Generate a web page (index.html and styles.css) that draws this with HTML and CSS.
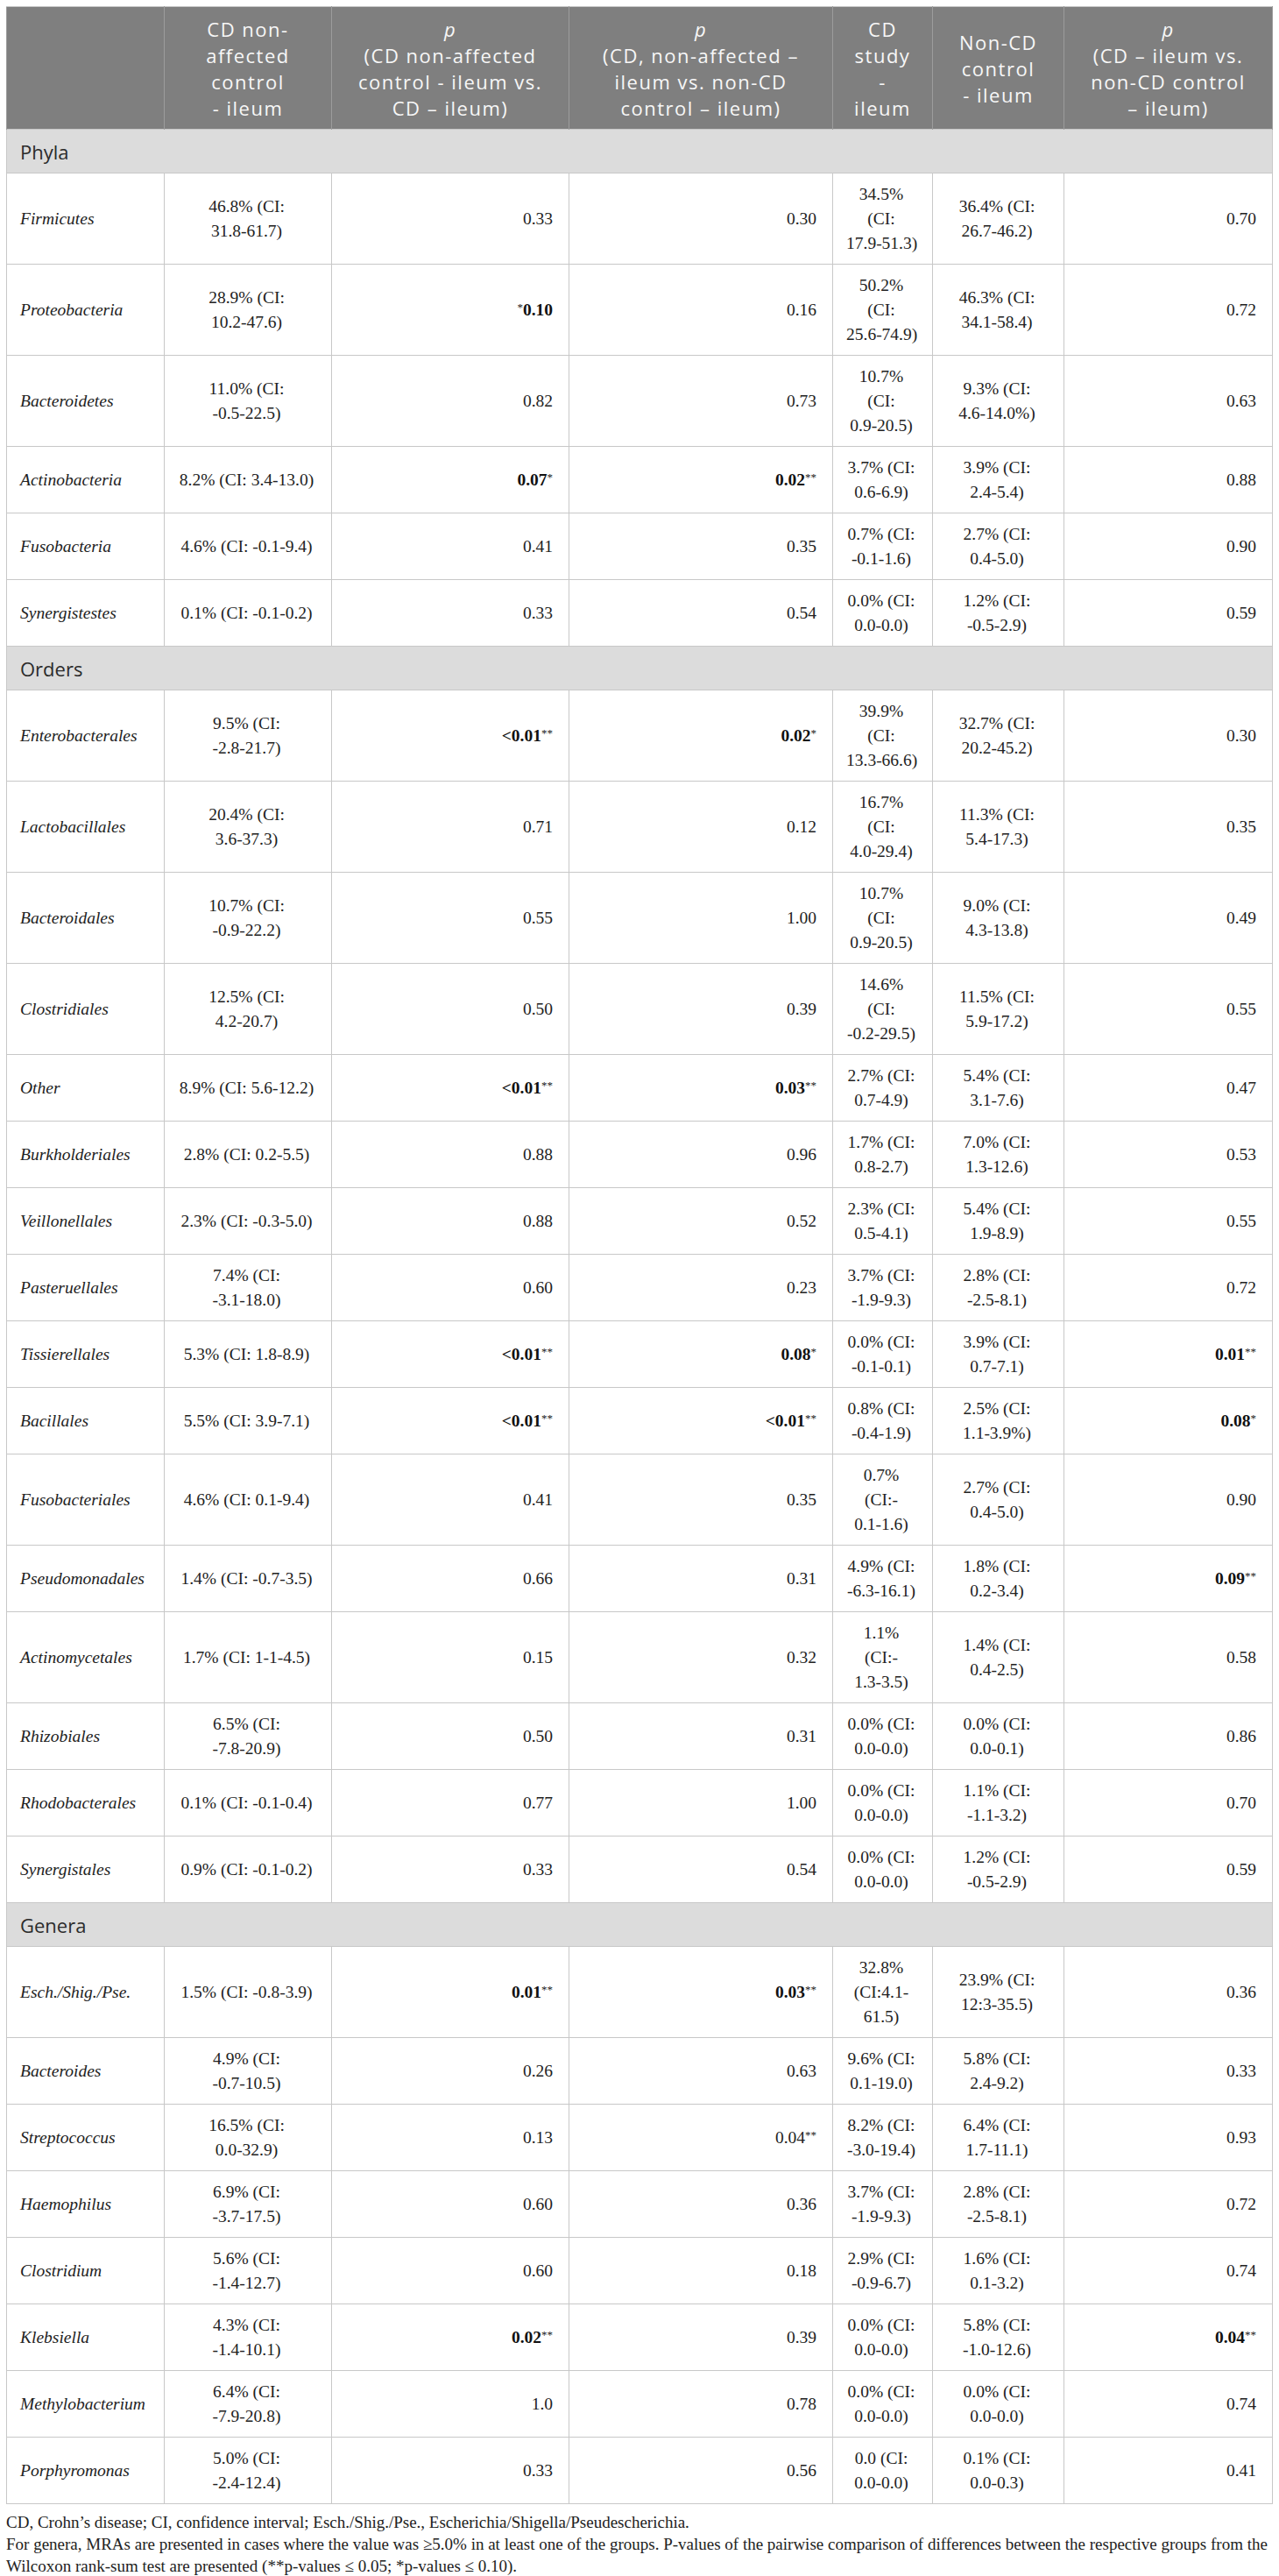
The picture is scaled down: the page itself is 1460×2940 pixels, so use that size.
FILE: index.html
```html
<!DOCTYPE html>
<html lang="en">
<head>
  <meta charset="UTF-8">
  <title>Mean relative abundance - ileum</title>
  <link rel="stylesheet" href="styles.css">
</head>
<body>

  <div class="page">

    <!-- Table -->
    <table class="mra-table">
      <colgroup>
        <col class="c-name">
        <col class="c-ctrl">
        <col class="c-p1">
        <col class="c-p2">
        <col class="c-study">
        <col class="c-nocd">
        <col class="c-p3">
      </colgroup>
      <thead>
        <tr>
          <th></th>
          <th>CD non-<br>affected<br>control<br>- ileum</th>
          <th><i>p</i><br>(CD non-affected<br>control - ileum vs.<br>CD – ileum)</th>
          <th><i>p</i><br>(CD, non-affected –<br>ileum vs. non-CD<br>control – ileum)</th>
          <th>CD<br>study<br>-<br>ileum</th>
          <th>Non-CD<br>control<br>- ileum</th>
          <th><i>p</i><br>(CD – ileum vs.<br>non-CD control<br>– ileum)</th>
        </tr>
      </thead>
      <tbody>
        <tr class="section"><td colspan="7">Phyla</td></tr>
        <tr>
          <td class="name">Firmicutes</td>
          <td class="mid">46.8% (CI:<br>31.8-61.7)</td>
          <td class="right">0.33</td>
          <td class="right">0.30</td>
          <td class="mid">34.5%<br>(CI:<br>17.9-51.3)</td>
          <td class="mid">36.4% (CI:<br>26.7-46.2)</td>
          <td class="right">0.70</td>
        </tr>
        <tr>
          <td class="name">Proteobacteria</td>
          <td class="mid">28.9% (CI:<br>10.2-47.6)</td>
          <td class="right"><span class="sig">*</span><b>0.10</b></td>
          <td class="right">0.16</td>
          <td class="mid">50.2%<br>(CI:<br>25.6-74.9)</td>
          <td class="mid">46.3% (CI:<br>34.1-58.4)</td>
          <td class="right">0.72</td>
        </tr>
        <tr>
          <td class="name">Bacteroidetes</td>
          <td class="mid">11.0% (CI:<br>-0.5-22.5)</td>
          <td class="right">0.82</td>
          <td class="right">0.73</td>
          <td class="mid">10.7%<br>(CI:<br>0.9-20.5)</td>
          <td class="mid">9.3% (CI:<br>4.6-14.0%)</td>
          <td class="right">0.63</td>
        </tr>
        <tr>
          <td class="name">Actinobacteria</td>
          <td class="mid">8.2% (CI: 3.4-13.0)</td>
          <td class="right"><b>0.07</b><span class="sig">*</span></td>
          <td class="right"><b>0.02</b><span class="sig">**</span></td>
          <td class="mid">3.7% (CI:<br>0.6-6.9)</td>
          <td class="mid">3.9% (CI:<br>2.4-5.4)</td>
          <td class="right">0.88</td>
        </tr>
        <tr>
          <td class="name">Fusobacteria</td>
          <td class="mid">4.6% (CI: -0.1-9.4)</td>
          <td class="right">0.41</td>
          <td class="right">0.35</td>
          <td class="mid">0.7% (CI:<br>-0.1-1.6)</td>
          <td class="mid">2.7% (CI:<br>0.4-5.0)</td>
          <td class="right">0.90</td>
        </tr>
        <tr>
          <td class="name">Synergistestes</td>
          <td class="mid">0.1% (CI: -0.1-0.2)</td>
          <td class="right">0.33</td>
          <td class="right">0.54</td>
          <td class="mid">0.0% (CI:<br>0.0-0.0)</td>
          <td class="mid">1.2% (CI:<br>-0.5-2.9)</td>
          <td class="right">0.59</td>
        </tr>

        <tr class="section"><td colspan="7">Orders</td></tr>
        <tr>
          <td class="name">Enterobacterales</td>
          <td class="mid">9.5% (CI:<br>-2.8-21.7)</td>
          <td class="right"><b>&lt;0.01</b><span class="sig">**</span></td>
          <td class="right"><b>0.02</b><span class="sig">*</span></td>
          <td class="mid">39.9%<br>(CI:<br>13.3-66.6)</td>
          <td class="mid">32.7% (CI:<br>20.2-45.2)</td>
          <td class="right">0.30</td>
        </tr>
        <tr>
          <td class="name">Lactobacillales</td>
          <td class="mid">20.4% (CI:<br>3.6-37.3)</td>
          <td class="right">0.71</td>
          <td class="right">0.12</td>
          <td class="mid">16.7%<br>(CI:<br>4.0-29.4)</td>
          <td class="mid">11.3% (CI:<br>5.4-17.3)</td>
          <td class="right">0.35</td>
        </tr>
        <tr>
          <td class="name">Bacteroidales</td>
          <td class="mid">10.7% (CI:<br>-0.9-22.2)</td>
          <td class="right">0.55</td>
          <td class="right">1.00</td>
          <td class="mid">10.7%<br>(CI:<br>0.9-20.5)</td>
          <td class="mid">9.0% (CI:<br>4.3-13.8)</td>
          <td class="right">0.49</td>
        </tr>
        <tr>
          <td class="name">Clostridiales</td>
          <td class="mid">12.5% (CI:<br>4.2-20.7)</td>
          <td class="right">0.50</td>
          <td class="right">0.39</td>
          <td class="mid">14.6%<br>(CI:<br>-0.2-29.5)</td>
          <td class="mid">11.5% (CI:<br>5.9-17.2)</td>
          <td class="right">0.55</td>
        </tr>
        <tr>
          <td class="name">Other</td>
          <td class="mid">8.9% (CI: 5.6-12.2)</td>
          <td class="right"><b>&lt;0.01</b><span class="sig">**</span></td>
          <td class="right"><b>0.03</b><span class="sig">**</span></td>
          <td class="mid">2.7% (CI:<br>0.7-4.9)</td>
          <td class="mid">5.4% (CI:<br>3.1-7.6)</td>
          <td class="right">0.47</td>
        </tr>
        <tr>
          <td class="name">Burkholderiales</td>
          <td class="mid">2.8% (CI: 0.2-5.5)</td>
          <td class="right">0.88</td>
          <td class="right">0.96</td>
          <td class="mid">1.7% (CI:<br>0.8-2.7)</td>
          <td class="mid">7.0% (CI:<br>1.3-12.6)</td>
          <td class="right">0.53</td>
        </tr>
        <tr>
          <td class="name">Veillonellales</td>
          <td class="mid">2.3% (CI: -0.3-5.0)</td>
          <td class="right">0.88</td>
          <td class="right">0.52</td>
          <td class="mid">2.3% (CI:<br>0.5-4.1)</td>
          <td class="mid">5.4% (CI:<br>1.9-8.9)</td>
          <td class="right">0.55</td>
        </tr>
        <tr>
          <td class="name">Pasteruellales</td>
          <td class="mid">7.4% (CI:<br>-3.1-18.0)</td>
          <td class="right">0.60</td>
          <td class="right">0.23</td>
          <td class="mid">3.7% (CI:<br>-1.9-9.3)</td>
          <td class="mid">2.8% (CI:<br>-2.5-8.1)</td>
          <td class="right">0.72</td>
        </tr>
        <tr>
          <td class="name">Tissierellales</td>
          <td class="mid">5.3% (CI: 1.8-8.9)</td>
          <td class="right"><b>&lt;0.01</b><span class="sig">**</span></td>
          <td class="right"><b>0.08</b><span class="sig">*</span></td>
          <td class="mid">0.0% (CI:<br>-0.1-0.1)</td>
          <td class="mid">3.9% (CI:<br>0.7-7.1)</td>
          <td class="right"><b>0.01</b><span class="sig">**</span></td>
        </tr>
        <tr>
          <td class="name">Bacillales</td>
          <td class="mid">5.5% (CI: 3.9-7.1)</td>
          <td class="right"><b>&lt;0.01</b><span class="sig">**</span></td>
          <td class="right"><b>&lt;0.01</b><span class="sig">**</span></td>
          <td class="mid">0.8% (CI:<br>-0.4-1.9)</td>
          <td class="mid">2.5% (CI:<br>1.1-3.9%)</td>
          <td class="right"><b>0.08</b><span class="sig">*</span></td>
        </tr>
        <tr>
          <td class="name">Fusobacteriales</td>
          <td class="mid">4.6% (CI: 0.1-9.4)</td>
          <td class="right">0.41</td>
          <td class="right">0.35</td>
          <td class="mid">0.7%<br>(CI:-<br>0.1-1.6)</td>
          <td class="mid">2.7% (CI:<br>0.4-5.0)</td>
          <td class="right">0.90</td>
        </tr>
        <tr>
          <td class="name">Pseudomonadales</td>
          <td class="mid">1.4% (CI: -0.7-3.5)</td>
          <td class="right">0.66</td>
          <td class="right">0.31</td>
          <td class="mid">4.9% (CI:<br>-6.3-16.1)</td>
          <td class="mid">1.8% (CI:<br>0.2-3.4)</td>
          <td class="right"><b>0.09</b><span class="sig">**</span></td>
        </tr>
        <tr>
          <td class="name">Actinomycetales</td>
          <td class="mid">1.7% (CI: 1-1-4.5)</td>
          <td class="right">0.15</td>
          <td class="right">0.32</td>
          <td class="mid">1.1%<br>(CI:-<br>1.3-3.5)</td>
          <td class="mid">1.4% (CI:<br>0.4-2.5)</td>
          <td class="right">0.58</td>
        </tr>
        <tr>
          <td class="name">Rhizobiales</td>
          <td class="mid">6.5% (CI:<br>-7.8-20.9)</td>
          <td class="right">0.50</td>
          <td class="right">0.31</td>
          <td class="mid">0.0% (CI:<br>0.0-0.0)</td>
          <td class="mid">0.0% (CI:<br>0.0-0.1)</td>
          <td class="right">0.86</td>
        </tr>
        <tr>
          <td class="name">Rhodobacterales</td>
          <td class="mid">0.1% (CI: -0.1-0.4)</td>
          <td class="right">0.77</td>
          <td class="right">1.00</td>
          <td class="mid">0.0% (CI:<br>0.0-0.0)</td>
          <td class="mid">1.1% (CI:<br>-1.1-3.2)</td>
          <td class="right">0.70</td>
        </tr>
        <tr>
          <td class="name">Synergistales</td>
          <td class="mid">0.9% (CI: -0.1-0.2)</td>
          <td class="right">0.33</td>
          <td class="right">0.54</td>
          <td class="mid">0.0% (CI:<br>0.0-0.0)</td>
          <td class="mid">1.2% (CI:<br>-0.5-2.9)</td>
          <td class="right">0.59</td>
        </tr>

        <tr class="section"><td colspan="7">Genera</td></tr>
        <tr>
          <td class="name">Esch./Shig./Pse.</td>
          <td class="mid">1.5% (CI: -0.8-3.9)</td>
          <td class="right"><b>0.01</b><span class="sig">**</span></td>
          <td class="right"><b>0.03</b><span class="sig">**</span></td>
          <td class="mid">32.8%<br>(CI:4.1-<br>61.5)</td>
          <td class="mid">23.9% (CI:<br>12:3-35.5)</td>
          <td class="right">0.36</td>
        </tr>
        <tr>
          <td class="name">Bacteroides</td>
          <td class="mid">4.9% (CI:<br>-0.7-10.5)</td>
          <td class="right">0.26</td>
          <td class="right">0.63</td>
          <td class="mid">9.6% (CI:<br>0.1-19.0)</td>
          <td class="mid">5.8% (CI:<br>2.4-9.2)</td>
          <td class="right">0.33</td>
        </tr>
        <tr>
          <td class="name">Streptococcus</td>
          <td class="mid">16.5% (CI:<br>0.0-32.9)</td>
          <td class="right">0.13</td>
          <td class="right">0.04<span class="sig">**</span></td>
          <td class="mid">8.2% (CI:<br>-3.0-19.4)</td>
          <td class="mid">6.4% (CI:<br>1.7-11.1)</td>
          <td class="right">0.93</td>
        </tr>
        <tr>
          <td class="name">Haemophilus</td>
          <td class="mid">6.9% (CI:<br>-3.7-17.5)</td>
          <td class="right">0.60</td>
          <td class="right">0.36</td>
          <td class="mid">3.7% (CI:<br>-1.9-9.3)</td>
          <td class="mid">2.8% (CI:<br>-2.5-8.1)</td>
          <td class="right">0.72</td>
        </tr>
        <tr>
          <td class="name">Clostridium</td>
          <td class="mid">5.6% (CI:<br>-1.4-12.7)</td>
          <td class="right">0.60</td>
          <td class="right">0.18</td>
          <td class="mid">2.9% (CI:<br>-0.9-6.7)</td>
          <td class="mid">1.6% (CI:<br>0.1-3.2)</td>
          <td class="right">0.74</td>
        </tr>
        <tr>
          <td class="name">Klebsiella</td>
          <td class="mid">4.3% (CI:<br>-1.4-10.1)</td>
          <td class="right"><b>0.02</b><span class="sig">**</span></td>
          <td class="right">0.39</td>
          <td class="mid">0.0% (CI:<br>0.0-0.0)</td>
          <td class="mid">5.8% (CI:<br>-1.0-12.6)</td>
          <td class="right"><b>0.04</b><span class="sig">**</span></td>
        </tr>
        <tr>
          <td class="name">Methylobacterium</td>
          <td class="mid">6.4% (CI:<br>-7.9-20.8)</td>
          <td class="right">1.0</td>
          <td class="right">0.78</td>
          <td class="mid">0.0% (CI:<br>0.0-0.0)</td>
          <td class="mid">0.0% (CI:<br>0.0-0.0)</td>
          <td class="right">0.74</td>
        </tr>
        <tr>
          <td class="name">Porphyromonas</td>
          <td class="mid">5.0% (CI:<br>-2.4-12.4)</td>
          <td class="right">0.33</td>
          <td class="right">0.56</td>
          <td class="mid">0.0 (CI:<br>0.0-0.0)</td>
          <td class="mid">0.1% (CI:<br>0.0-0.3)</td>
          <td class="right">0.41</td>
        </tr>
      </tbody>
    </table>

    <!-- Notes -->
    <div class="notes">
      <p>CD, Crohn’s disease; CI, confidence interval; Esch./Shig./Pse., Escherichia/Shigella/Pseudescherichia.</p>
      <p>For genera, MRAs are presented in cases where the value was ≥5.0% in at least one of the groups. P-values of the pairwise comparison of differences between the respective groups from the<br>Wilcoxon rank-sum test are presented (**p-values ≤ 0.05; *p-values ≤ 0.10).</p>
    </div>

  </div>

</body>
</html>
```

FILE: styles.css
```css
* {
  box-sizing: border-box;
  margin: 0;
  padding: 0;
}

body {
  background: white;
  color: #222;
  font-family: "Liberation Serif", serif;
}

.page {
  padding: 7px 8px 0 7px;
}

.mra-table {
  width: 1445px;
  border-collapse: collapse;
  table-layout: fixed;
  border: 1px solid #c8c8c8;
}

.c-name { width: 180px; }
.c-ctrl { width: 191px; }
.c-p1 { width: 271px; }
.c-p2 { width: 301px; }
.c-study { width: 114px; }
.c-nocd { width: 150px; }
.c-p3 { width: 238px; }

.mra-table th {
  background: #7f7f7f;
  color: #f7f7f7;
  font-family: "Open Sans", sans-serif;
  font-weight: normal;
  font-size: 22px;
  line-height: 30px;
  letter-spacing: 1.5px;
  text-align: center;
  vertical-align: middle;
  padding: 10px 6px 9px;
  border-left: 1px solid #9c9c9c;
  border-right: 1px solid #9c9c9c;
  border-top: 1px solid #c8c8c8;
}

.mra-table td {
  font-size: 19.5px;
  line-height: 28px;
  padding: 10px 18px 9px 15px;
  border: 1px solid #c8c8c8;
  vertical-align: middle;
  white-space: nowrap;
}

.mra-table .section td {
  background: #dcdcdc;
  font-family: "Open Sans", sans-serif;
  font-size: 22px;
  line-height: 30px;
  color: #2b2b2b;
}

.name {
  font-style: italic;
}

.mid {
  text-align: center;
}

.right {
  text-align: right;
}

.mra-table b {
  font-weight: bold;
  color: #111;
}

.sig {
  font-size: 13px;
  vertical-align: 5px;
  line-height: 0;
}

.notes {
  margin-top: 8px;
  font-size: 19px;
  line-height: 25px;
  color: #222;
}
```
